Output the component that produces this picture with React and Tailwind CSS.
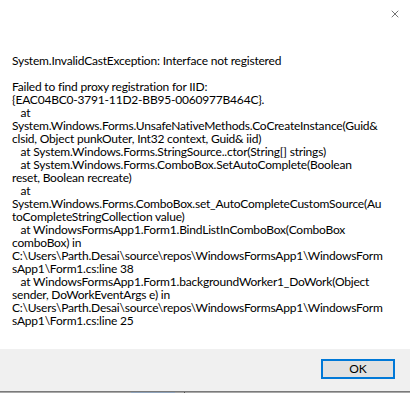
import { X } from 'lucide-react';

const lines = [
  'System.InvalidCastException: Interface not registered',
  '',
  'Failed to find proxy registration for IID:',
  '{EAC04BC0-3791-11D2-BB95-0060977B464C}.',
  '   at',
  'System.Windows.Forms.UnsafeNativeMethods.CoCreateInstance(Guid&',
  'clsid, Object punkOuter, Int32 context, Guid& iid)',
  '   at System.Windows.Forms.StringSource..ctor(String[] strings)',
  '   at System.Windows.Forms.ComboBox.SetAutoComplete(Boolean',
  'reset, Boolean recreate)',
  '   at',
  'System.Windows.Forms.ComboBox.set_AutoCompleteCustomSource(Au',
  'toCompleteStringCollection value)',
  '   at WindowsFormsApp1.Form1.BindListInComboBox(ComboBox',
  'comboBox) in',
  'C:\\Users\\Parth.Desai\\source\\repos\\WindowsFormsApp1\\WindowsForm',
  'sApp1\\Form1.cs:line 38',
  '   at WindowsFormsApp1.Form1.backgroundWorker1_DoWork(Object',
  'sender, DoWorkEventArgs e) in',
  'C:\\Users\\Parth.Desai\\source\\repos\\WindowsFormsApp1\\WindowsForm',
  'sApp1\\Form1.cs:line 25',
];

export default function App() {
  return (
    <div className="w-[410px] h-[393px] flex flex-col bg-white font-['Lato',sans-serif] text-black overflow-hidden">
      {/* Title bar */}
      <div className="h-[54px] flex justify-end items-start pt-[8px] pr-[9px]">
        <X className="w-[12px] h-[12px]" strokeWidth={1.1} />
      </div>

      {/* Message */}
      <div className="flex-1 pl-[12px] text-[12px] leading-[13px] tracking-[-0.2px]">
        {lines.map((line, i) => (
          <div key={i} className="whitespace-pre h-[13px]">{line}</div>
        ))}
      </div>

      {/* Footer */}
      <div className="h-[42px] bg-[#f0f0f0] flex justify-end items-start pt-[10px] pr-[15px]">
        <button className="w-[74px] h-[20px] border-2 border-[#0078d7] bg-[#e1e1e1] text-[12px] leading-none flex items-center justify-center">
          OK
        </button>
      </div>
      <div className="h-px bg-[#7a7a7a]" />
      <div className="h-px flex bg-[#a8a8a8]">
        <div className="w-[131px]" />
        <div className="w-[44px] bg-[#8fa3bb]" />
        <div className="w-[9px]" />
        <div className="w-px bg-[#555]" />
      </div>
    </div>
  );
}
